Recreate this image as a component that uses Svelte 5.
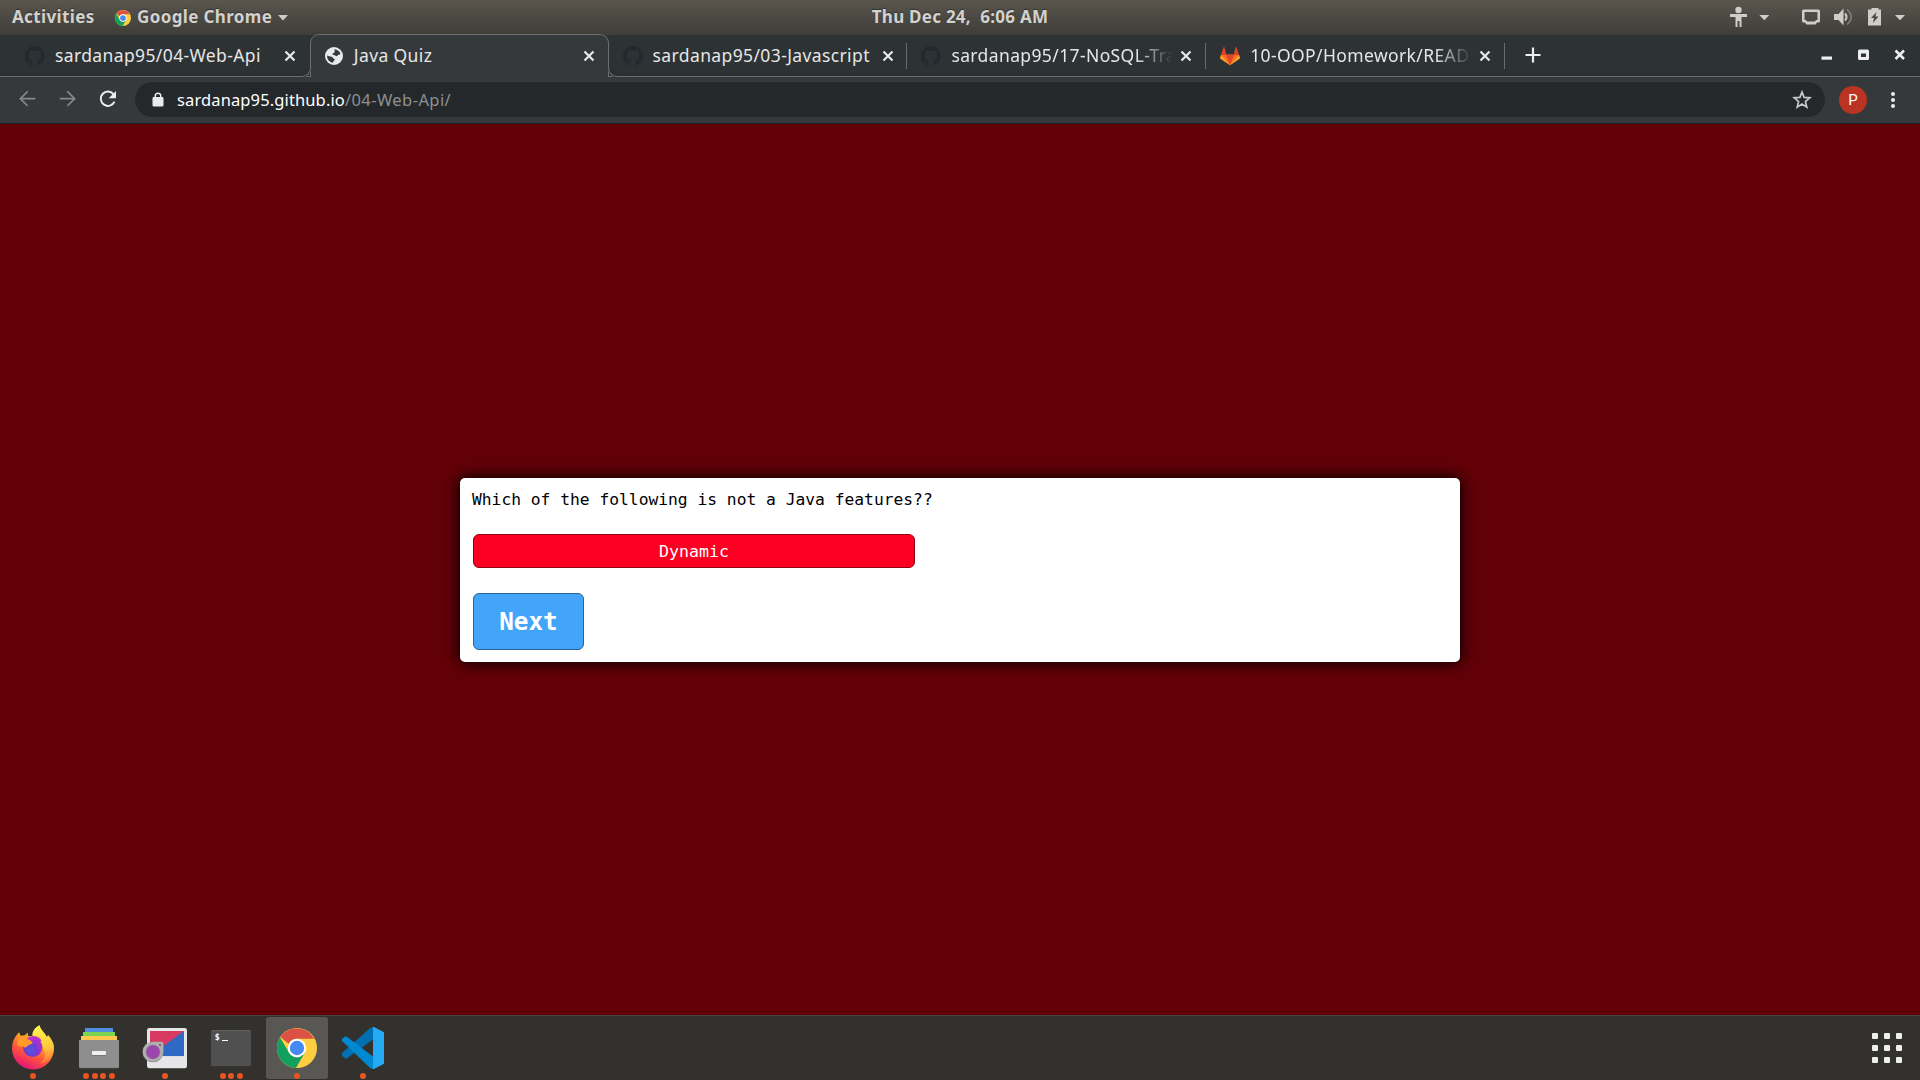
<script>
  const tabs = [
    { title: 'sardanap95/04-Web-Api', icon: 'github' },
    { title: 'Java Quiz', icon: 'globe', active: true },
    { title: 'sardanap95/03-Javascript', icon: 'github', sep: true },
    { title: 'sardanap95/17-NoSQL-Tra', icon: 'github', sep: true, fade: true },
    { title: '10-OOP/Homework/READ', icon: 'gitlab', sep: true, fade: true },
  ];
  const apps = [
    { name: 'firefox', dots: 1 },
    { name: 'files', dots: 4 },
    { name: 'shotwell', dots: 1 },
    { name: 'terminal', dots: 3 },
    { name: 'chrome', dots: 1, active: true },
    { name: 'vscode', dots: 1 },
  ];
</script>

{#snippet chromeLogo()}
  <circle cx="24" cy="24" r="24" fill="#ffcd40" />
  <path d="M3.2 12A24 24 0 0 1 44.8 13H24a11 11 0 0 0-10 6L4 10.700z" fill="#dd5144" />
  <path d="M3.600 11.500A24 24 0 0 0 22.700 48L33.500 29.500 24 35a11 11 0 0 1-9.600-5.600z" fill="#11a05d" />
  <circle cx="24" cy="24" r="11" fill="#fff" />
  <circle cx="24" cy="24" r="8.600" fill="#4688f4" />
{/snippet}

<div class="desktop">
  <header class="topbar">
    <div class="left">
      <span class="act">Activities</span>
      <svg class="mini" viewBox="0 0 48 48">{@render chromeLogo()}</svg>
      <span class="app">Google Chrome</span>
      <svg class="caret" viewBox="0 0 10 6"><path d="M0 0h10L5 5.500z" /></svg>
    </div>
    <span class="clock">Thu Dec 24,&nbsp; 6:06 AM</span>
    <svg class="status" viewBox="0 0 210 35">
      <circle cx="28.500" cy="10" r="3.200" />
      <path d="M20 14h17v3h-5.500v10h-2v-6h-2v6h-2V17H20z" />
      <path d="M49.300 15h10l-5 5.300zM185 15h10l-5 5.300z" />
      <path fill-rule="evenodd" d="M93.500 9.500h15q1.500 0 1.500 1.500v10q0 1.500-1.500 1.500H107l-1.500 2h-9l-1.500-2h-1.500q-1.500 0-1.500-1.500V11q0-1.500 1.500-1.500zM94.500 12v8h1.500l1 1.500h8l1-1.500h1.500v-8z" />
      <path d="M124 14h4.500l5-5.500v17l-5-5.500H124z" />
      <path d="M135 13.500q3 3.500 0 7" fill="none" stroke="#cfcdc8" stroke-width="2" />
      <path d="M137 9.500q8.500 7.500 0 15" fill="none" stroke="#85827b" stroke-width="1.600" />
      <path fill-rule="evenodd" d="M161.500 8h7v1.500h2.500v16h-13v-16h3.500zM166.500 12l-5.500 6h3l-1 5 5.500-6.500h-3z" />
    </svg>
  </header>

  <nav class="tabs">
    {#each tabs as t}
      <div class="tab" class:active={t.active} class:sep={t.sep}>
        {#if t.icon === 'github'}
          <svg class="fav" viewBox="0 0 20 20"><path fill="#23292e" d="M10 0A10 10 0 0 0 6.800 19.500c.5.100.7-.2.700-.5v-1.900c-2.800.6-3.400-1.200-3.400-1.200-.5-1.100-1.100-1.500-1.100-1.500-.9-.6.100-.6.100-.6 1 .1 1.500 1 1.500 1 .9 1.600 2.400 1.100 2.900.9.100-.7.400-1.100.6-1.400-2.200-.3-4.500-1.100-4.500-4.900 0-1.100.4-2 1-2.700-.1-.2-.4-1.200.1-2.600 0 0 .8-.3 2.700 1a9.500 9.500 0 0 1 5 0c1.900-1.300 2.700-1 2.700-1 .5 1.400.2 2.400.1 2.600.6.700 1 1.600 1 2.700 0 3.800-2.300 4.700-4.500 4.900.4.300.7.900.7 1.800V19c0 .3.200.6.700.5A10 10 0 0 0 10 0z" /></svg>
        {:else if t.icon === 'globe'}
          <svg class="fav" viewBox="0 0 20 20"><circle cx="10" cy="10" r="9" fill="#e8eaed" /><path fill="#35393c" d="M10.500 3.200c3 .2 5.200 2 6 4.600-.8 1.400-2.300.6-2.800 1.500-.5 1-1.600 1.300-2.400.3-.6-.7-1.800-.1-2.500-.8-.8-.9.200-1.600 1-1.700.8-.2.300-1.200.9-1.600.6-.5-.7-1.300-.2-2.300zM3.100 9.500c1.500.7 2.900 1.200 4.400 1.300 1.300.1 1.300 1.200 2 1.600.9.500 1.500.5 1.200 1.500-.3.900-1.700.8-1.700 2.900-3.600-.5-6-3.300-5.900-7.300z" /></svg>
        {:else}
          <svg class="fav" viewBox="0 0 60 60"><path fill="#fca326" d="M3 26L0 35q0 3 2 4l28 19 28-19q2-1 2-4l-3-9z" /><path fill="#fc6d26" d="M3 26l27 32 27-32-8 0-38 0z" /><path fill="#e24329" d="M18 26h24L30 58zM3 26L11 3q1-1.500 2 0l6 23zM57 26L49 3q-1-1.500-2 0l-6 23z" /></svg>
        {/if}
        <span class="title" class:fade={t.fade}>{t.title}</span>
        <svg class="x" viewBox="0 0 12 12"><path d="M1.500 1.500l9 9m0-9l-9 9" /></svg>
      </div>
    {/each}
    <svg class="plus" viewBox="0 0 16 16"><path d="M8 .5v15M.5 8h15" /></svg>
    <svg class="winctl" viewBox="0 0 86 12">
      <path d="M.5 7.500h10.500v3.200H.5z" />
      <path fill-rule="evenodd" d="M38.500.5h8q1.500 0 1.500 1.500v7.500q0 1.500-1.500 1.500h-8Q37 11 37 9.500V2Q37 .5 38.500.5zM40 4.500v3.500h5v-3.500z" />
      <path d="M74.500 1.500l8.500 8.500m0-8.500l-8.500 8.500" fill="none" stroke="#eee" stroke-width="2.500" />
    </svg>
  </nav>

  <div class="toolbar">
    <svg class="navs" viewBox="0 0 390 108">
      <g fill="none" stroke-width="5">
        <path stroke="#85898b" d="M106 50H62M83 28L61 50l22 22M179 50h44M202 28l22 22-22 22" />
        <path stroke="#ececec" stroke-width="6" d="M341 37A21.500 21.500 0 1 0 343.500 59" />
      </g>
      <path fill="#ececec" d="M348 27v22h-22z" />
    </svg>
    <div class="omni">
      <svg class="lock" viewBox="0 0 12 15"><path fill="#e8eaed" fill-rule="evenodd" d="M2.500 5V4a3.400 3.400 0 0 1 7 0v1h.7q1.300 0 1.300 1.300v6.900q0 1.300-1.300 1.300H1.800Q.5 14.500.5 13.200V6.300Q.5 5 1.800 5zM4 5h4V4a2 2 0 0 0-4 0z" /></svg>
      <span class="host">sardanap95.github.io</span><span class="path">/04-Web-Api/</span>
      <svg class="star" viewBox="0 0 24 24"><path d="M12 4l2.100 5.400 5.700.4-4.400 3.700 1.400 5.600-4.800-3.100-4.800 3.100 1.400-5.600-4.400-3.700 5.700-.4z" /></svg>
    </div>
    <span class="avatar">P</span>
    <svg class="dots3" viewBox="0 0 4 18"><circle cx="2" cy="3" r="2" /><circle cx="2" cy="9" r="2" /><circle cx="2" cy="15" r="2" /></svg>
  </div>

  <main>
    <section class="card">
      <p>Which of the following is not a Java features??</p>
      <button class="answer">Dynamic</button>
      <button class="next">Next</button>
    </section>
  </main>

  <footer>
    {#each apps as a}
      <div class="tile" class:on={a.active}>
        {#if a.name === 'firefox'}
          <svg viewBox="6 51 186 186">
            <defs>
              <linearGradient id="ff" x1=".8" y1="0" x2=".3" y2="1"><stop offset="0" stop-color="#fff44f" /><stop offset=".35" stop-color="#ffb02e" /><stop offset=".65" stop-color="#ff5a36" /><stop offset="1" stop-color="#e4107c" /></linearGradient>
              <linearGradient id="fy" x1=".5" y1="0" x2=".6" y2="1"><stop offset="0" stop-color="#fff64f" /><stop offset=".6" stop-color="#ffc63a" /><stop offset="1" stop-color="#ff7139" /></linearGradient>
              <radialGradient id="fp" cx=".4" cy=".65"><stop offset="0" stop-color="#5b55dc" /><stop offset=".6" stop-color="#6a3fd6" /><stop offset="1" stop-color="#a32fd0" /></radialGradient>
            </defs>
            <path fill="url(#ff)" d="M57 97q2 7 5 10l12-1q5-6 10-7l-1 10 17-2q-4-17 18-31 2 9 10 18 9 9 13 19l3-8q18 20 18 39a63 63 0 0 1-126 3q-1-28 21-50z" />
            <path fill="url(#fy)" d="M97 107q-1-18 21-31 2 9 11 19 7 8 13 17l2-7q22 28 16 48-8 32-40 38 26-22 6-54-9-20-29-30z" />
            <circle cx="98" cy="142" r="29" fill="url(#fp)" />
            <path fill="#ff9a2b" d="M57 97q2 9 6 11h12l9-9q-2 8 1 17l13 11q-1 6-12 8l-7 6q-3 4-10-2-9 2-17-3z" />
            <path fill="#b833d0" d="M80 117q10-11 27-8 17 5 18 17-5-3-10-2-7-7-18-3z" />
          </svg>
        {:else if a.name === 'files'}
          <svg viewBox="204 51 186 186">
            <path fill="#4f8fe0" d="M255 84h84v14h-84z" /><path fill="#7bd551" d="M249 96h96v14h-96z" /><path fill="#ffc94f" d="M243 108h108v14H243z" />
            <rect x="237" y="120" width="120" height="85" rx="4" fill="#6c6c6c" /><rect x="237" y="120" width="120" height="83" rx="4" fill="#8e8e8e" />
            <rect x="276" y="154" width="42" height="13" rx="2" fill="#6e6e6e" /><rect x="276" y="153" width="42" height="12" rx="2" fill="#f0f0f0" />
          </svg>
        {:else if a.name === 'shotwell'}
          <svg viewBox="402 51 186 186">
            <rect x="441" y="84" width="120" height="121" rx="7" fill="#e6e6e8" /><path fill="#c4c4c8" d="M450 166h102v3H450z" />
            <path fill="#3069c3" d="M450 93h102v75H450" /><path fill="#d83a61" d="M450 93h102L450 168z" />
            <path fill="#89878b" d="M459 127h25q6 0 6 6v24a31 30 0 1 1-31-30z" /><path fill="#b0aeb0" d="M459 125h25q6 0 6 6v24a31 30 0 1 1-31-30z" />
            <circle cx="459" cy="156" r="21" fill="#9b45ad" stroke="#86858c" stroke-width="2" /><circle cx="480" cy="135" r="3" fill="#555" />
          </svg>
        {:else if a.name === 'terminal'}
          <svg viewBox="0 51 186 186">
            <rect x="33" y="91" width="120" height="108" rx="5" fill="#3e3e3e" /><rect x="33" y="90" width="120" height="107" rx="5" fill="#666" /><rect x="33" y="92" width="120" height="105" rx="5" fill="#505050" />
            <text x="44" y="120" font-size="25" fill="#fff">$</text><path fill="#fff" d="M66 120h18v3H66z" />
          </svg>
        {:else if a.name === 'chrome'}
          <svg viewBox="198 51 186 186"><g transform="translate(231 84) scale(2.5)">{@render chromeLogo()}</g></svg>
        {:else}
          <svg viewBox="396 51 186 186">
            <path fill="#0070b3" d="M520 81v37L438 177l-12-10v-8L508 86q6-5 12-5z" />
            <path fill="#0088d0" d="M426 123v-6l10-8 5 1 79 60v37q-6 0-12-5z" />
            <path fill="#25a9f2" d="M519 81h3l30 16v94l-30 16h-3z" />
          </svg>
        {/if}
        <span class="pips">{#each Array(a.dots) as _}<i></i>{/each}</span>
      </div>
    {/each}
    <div class="grid">{#each Array(9) as _}<b></b>{/each}</div>
  </footer>
</div>

<style>
  :global(body) { margin: 0; overflow: hidden; }
  .desktop { width: 1920px; height: 1080px; display: flex; flex-direction: column; font-family: 'Noto Sans', 'Open Sans', sans-serif; }
  svg { display: block; flex: none; }
  span { white-space: nowrap; }

  .topbar { height: 35px; flex: none; display: grid; grid-template-columns: 1fr auto 1fr; align-items: center; background: linear-gradient(#5a564e, #3e3d38); color: #d3d1cd; font-weight: 700; font-size: 17px; letter-spacing: .36px; line-height: 33px; text-shadow: 0 -1px 1px #33312d; }
  .topbar > span, .left > span { padding-bottom: 2px; }
  .clock { letter-spacing: .25px; }
  .left { display: flex; align-items: center; padding-left: 12px; }
  .act { width: 103px; }
  .mini { width: 16px; height: 16px; margin-right: 6px; }
  .app { width: 141px; }
  .caret { width: 10px; height: 6px; fill: #cfcdc8; }
  .status { width: 210px; height: 35px; justify-self: end; fill: #cfcdc8; }

  .tabs { height: 42px; flex: none; box-sizing: border-box; display: flex; align-items: flex-start; padding-left: 11px; background: linear-gradient(#2d3234 38px, #282c2e 41px, #6b6f71 41px); }
  .tab { width: 298.800px; flex: none; height: 41px; box-sizing: border-box; display: flex; align-items: center; padding: 0 14px; position: relative; color: #e6e6e6; }
  .tab.active { height: 43px; margin: -1px 0 0; padding: 0 13px 1px; background: #35393c; border: 1px solid #6b6f71; border-bottom: 0; border-radius: 9px 9px 0 0; }
  .tab.active::before, .tab.active::after { content: ''; position: absolute; bottom: 0; width: 9px; height: 9px; box-sizing: border-box; border-bottom: 1px solid #6b6f71; background: #2b3032; box-shadow: 0 1px #35393c; }
  .tab.active::before { left: -9px; border-right: 1px solid #6b6f71; border-bottom-right-radius: 9px; }
  .tab.active::after { right: -9px; border-left: 1px solid #6b6f71; border-bottom-left-radius: 9px; }
  .tab.sep::after { content: ''; position: absolute; right: 0; top: 8px; width: 1px; height: 26px; background: #686c6e; }
  .fav { width: 20px; height: 20px; margin-right: 10px; }
  .title { width: 229px; flex: none; font-size: 17.500px; letter-spacing: .38px; line-height: 30px; padding-bottom: 2px; }
  .fade { mask-image: linear-gradient(90deg, #000 185px, transparent 222px); }
  .x { width: 12px; height: 12px; stroke: #e8e8e8; stroke-width: 2.200; fill: none; }
  .plus { width: 16px; height: 16px; margin: 12px 0 0 20px; stroke: #eee; stroke-width: 2.200; fill: none; }
  .winctl { width: 86px; height: 12px; margin: 14px 13px 0 auto; fill: #eee; }

  .toolbar { height: 47px; flex: none; box-sizing: border-box; display: flex; align-items: center; background: #35393c; border-bottom: 1px solid #1d2122; padding-bottom: 1px; }
  .navs { width: 130px; height: 36px; margin-right: 5px; }
  .omni { width: 1690px; height: 35px; box-sizing: border-box; display: flex; align-items: center; border-radius: 18px; background: #24282a; padding: 0 11px 0 17px; font-size: 16.500px; }
  .lock { width: 12px; height: 15px; margin-right: 13px; }
  .host { color: #fff; letter-spacing: .12px; }
  .path { color: #8d9092; letter-spacing: .42px; }
  .star { width: 24px; height: 24px; margin-left: auto; fill: none; stroke: #c6c8c9; stroke-width: 1.700; }
  .avatar { width: 28px; height: 28px; margin: 0 23.500px 0 14px; border-radius: 50%; background: #bb3322; color: #fff; font: 15px/28px Roboto, sans-serif; text-align: center; }
  .dots3 { width: 4px; height: 18px; fill: #eee; }

  main { flex: 1; display: flex; align-items: flex-start; justify-content: center; padding-top: 354px; background: #620007; font-family: 'DejaVu Sans Mono', monospace; }
  .card { width: 1000px; height: 184px; box-sizing: border-box; padding: 12px 13px; display: flex; flex-direction: column; align-items: flex-start; border-radius: 5px; background: #fff; box-shadow: 0 0 15px 1px #000; }
  p { margin: 0 0 25px -1px; font-size: 16.300px; line-height: 19px; color: #000; }
  button { box-sizing: border-box; padding: 0; font-family: inherit; color: #fff; border-radius: 6px; }
  .answer { width: 442px; height: 34px; margin-bottom: 25px; font-size: 16.600px; background: #fb0022; border: 1px solid #970014; }
  .next { width: 111px; height: 57px; font-size: 24.300px; font-weight: 700; background: #42a5fa; border: 1px solid #276396; }

  footer { height: 65px; flex: none; box-sizing: border-box; display: flex; gap: 4px; padding: 1px 0 0 2px; border-top: 1px solid #464340; background: #33312d; }
  .tile { width: 62px; height: 62px; border-radius: 3px; position: relative; }
  .tile.on { background: #595753; }
  .tile svg { width: 62px; height: 62px; }
  .tile text { font-family: 'DejaVu Sans Mono', monospace; font-weight: 700; }
  .pips { position: absolute; left: 0; right: 0; bottom: 0; height: 6px; display: flex; justify-content: center; gap: 2.500px; }
  .pips i { width: 6px; height: 6px; border-radius: 50%; background: #e95420; }
  .grid { display: grid; grid-template-columns: repeat(3, 6px); grid-auto-rows: 6px; gap: 6px; margin: 16px 18px 0 auto; }
  .grid b { background: #eeeeec; border-radius: 1px; }
</style>
